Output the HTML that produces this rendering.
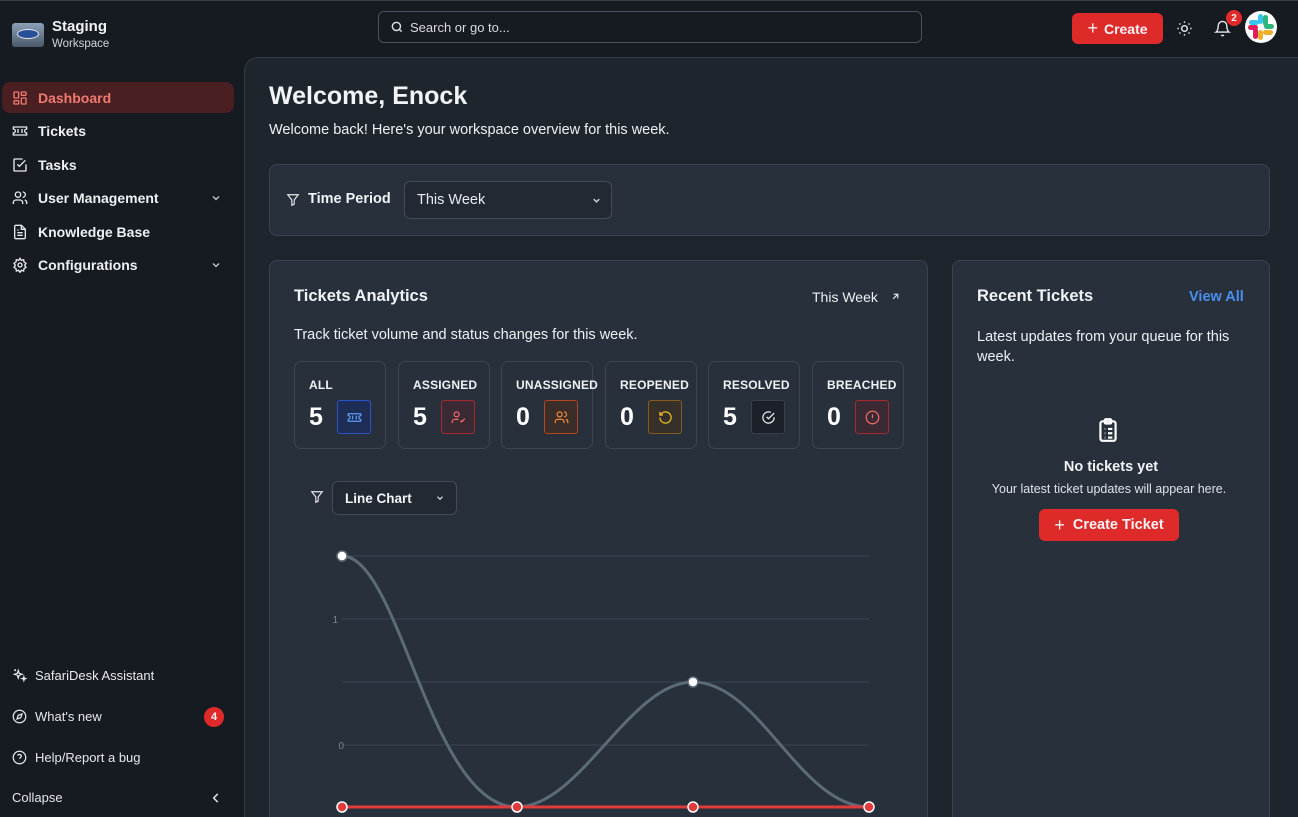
<!DOCTYPE html>
<html style="overflow:hidden;width:1298px;height:817px"><head><meta charset="utf-8"><style>
*{box-sizing:border-box;margin:0;padding:0}
body{width:1298px;height:817px;overflow:hidden;background:#161a21;font-family:"Liberation Sans",sans-serif;color:#f1f3f6;position:relative}
.abs{position:absolute}
svg{display:block}
.nav{position:absolute;left:2px;width:232px;height:31px;display:flex;align-items:center;padding-left:10px;font-size:14px;font-weight:bold;color:#eef0f3}
.nav svg{margin-right:10px}
.nav .chev{position:absolute;right:12px;margin:0}
.bot{position:absolute;left:12px;display:flex;align-items:center;font-size:13px;color:#e6e8eb}
.bot svg{margin-right:8px}
.card{position:absolute;background:#27303b;border:1px solid #3a4350;border-radius:8px}
.stat{position:absolute;top:361px;width:92px;height:88px;border:1px solid #3c4552;border-radius:7px}
.stat .l{position:absolute;left:14px;top:16px;font-size:12px;font-weight:bold;letter-spacing:.2px;color:#f0f2f5}
.stat .n{position:absolute;left:14px;top:41px;font-size:25px;font-weight:bold;color:#fff}
.stat .ic{position:absolute;left:42px;top:38px;width:34px;height:34px;border-radius:3px;border:1px solid;display:flex;align-items:center;justify-content:center}
</style></head><body>
<div class="abs" style="left:0;top:0;width:1298px;height:1px;background:#3a3f47"></div>
<div class="abs" style="left:12px;top:23px;width:32px;height:24px;border-radius:3px;background:linear-gradient(#8aa0b8,#4a5a6a);overflow:hidden"><div style="margin:6px 5px;height:10px;border-radius:50%;background:#2a4f9a;border:1px solid #e8e8e8"></div></div>
<div class="abs" style="left:52px;top:18px;font-size:15px;font-weight:bold">Staging</div>
<div class="abs" style="left:52px;top:38px;font-size:11.5px;color:#d0d5dc">Workspace</div>
<div class="nav" style="top:82px;background:#4a1f22;border-radius:8px;color:#f07a72"><svg width="16" height="16" viewBox="0 0 24 24" fill="none" stroke="#f07a72" stroke-width="2"><rect x="3" y="3" width="7" height="9" rx="1"/><rect x="14" y="3" width="7" height="5" rx="1"/><rect x="14" y="12" width="7" height="9" rx="1"/><rect x="3" y="16" width="7" height="5" rx="1"/></svg>Dashboard</div>
<div class="nav" style="top:115px"><svg width="16" height="16" viewBox="0 0 24 24" fill="none" stroke="#e8eaed" stroke-width="2"><path d="M2 9a3 3 0 0 1 0 6v3h20v-3a3 3 0 0 1 0-6V6H2z M9 9v6 M15 9v6"/></svg>Tickets</div>
<div class="nav" style="top:149px"><svg width="16" height="16" viewBox="0 0 24 24" fill="none" stroke="#e8eaed" stroke-width="2"><path d="M21 11v9a1 1 0 0 1-1 1H4a1 1 0 0 1-1-1V4a1 1 0 0 1 1-1h12"/><path d="M8 11l3 3 9-9"/></svg>Tasks</div>
<div class="nav" style="top:182px"><svg width="16" height="16" viewBox="0 0 24 24" fill="none" stroke="#e8eaed" stroke-width="2"><circle cx="9" cy="7" r="4"/><path d="M2 21v-2a4 4 0 0 1 4-4h6a4 4 0 0 1 4 4v2M16 3a4 4 0 0 1 0 8M22 21v-2a4 4 0 0 0-3-4"/></svg>User Management<svg class="chev" width="12" height="12" viewBox="0 0 24 24" fill="none" stroke="#c8ccd2" stroke-width="2.5"><path d="M6 9l6 6 6-6"/></svg></div>
<div class="nav" style="top:216px"><svg width="16" height="16" viewBox="0 0 24 24" fill="none" stroke="#e8eaed" stroke-width="2"><path d="M14 2H6a2 2 0 0 0-2 2v16a2 2 0 0 0 2 2h12a2 2 0 0 0 2-2V8z M14 2v6h6 M8 13h8 M8 17h8 M8 9h2"/></svg>Knowledge Base</div>
<div class="nav" style="top:249px"><svg width="16" height="16" viewBox="0 0 24 24" fill="none" stroke="#e8eaed" stroke-width="2"><circle cx="12" cy="12" r="3"/><path d="M12 2l2 3 3.5-1 .5 3.5 3 2-2 3 2 3-3 2-.5 3.5-3.5-1-2 3-2-3-3.5 1-.5-3.5-3-2 2-3-2-3 3-2 .5-3.5 3.5 1z"/></svg>Configurations<svg class="chev" width="12" height="12" viewBox="0 0 24 24" fill="none" stroke="#c8ccd2" stroke-width="2.5"><path d="M6 9l6 6 6-6"/></svg></div>
<div class="bot" style="top:668px"><svg width="15" height="15" viewBox="0 0 24 24" fill="none" stroke="#e6e8eb" stroke-width="2"><path d="M10 4l1.5 4.5L16 10l-4.5 1.5L10 16l-1.5-4.5L4 10l4.5-1.5z M19 14l.7 2.3 2.3.7-2.3.7L19 20l-.7-2.3-2.3-.7 2.3-.7z M5 2v3M3.5 3.5h3"/></svg>SafariDesk Assistant</div>
<div class="bot" style="top:709px"><svg width="15" height="15" viewBox="0 0 24 24" fill="none" stroke="#e6e8eb" stroke-width="2"><circle cx="12" cy="12" r="10"/><path d="M16 8l-2 6-6 2 2-6z"/></svg>What's new</div>
<div class="abs" style="left:204px;top:707px;width:20px;height:20px;border-radius:50%;background:#e02a2a;font-size:11px;font-weight:bold;display:flex;align-items:center;justify-content:center">4</div>
<div class="bot" style="top:750px"><svg width="15" height="15" viewBox="0 0 24 24" fill="none" stroke="#e6e8eb" stroke-width="2"><circle cx="12" cy="12" r="10"/><path d="M9.1 9a3 3 0 0 1 5.8 1c0 2-3 2.5-3 4M12 17.5v.5"/></svg>Help/Report a bug</div>
<div class="bot" style="top:790px">Collapse</div>
<svg class="abs" style="left:209px;top:791px" width="14" height="14" viewBox="0 0 24 24" fill="none" stroke="#e6e8eb" stroke-width="2.5"><path d="M15 5l-7 7 7 7"/></svg>
<div class="abs" style="left:378px;top:11px;width:544px;height:32px;border:1px solid #4a515c;border-radius:6px;background:#161a21;display:flex;align-items:center;padding-left:11px;font-size:13px;color:#d8dce2"><svg width="14" height="14" viewBox="0 0 24 24" fill="none" stroke="#d8dce2" stroke-width="2.5" style="margin-right:6px"><circle cx="11" cy="11" r="7"/><path d="M20 20l-4-4"/></svg>Search or go to...</div>
<div class="abs" style="left:1072px;top:13px;width:91px;height:31px;border-radius:6px;background:#df2a2a;display:flex;align-items:center;justify-content:center;font-size:14px;font-weight:bold"><span style="font-size:18px;font-weight:normal;margin-right:6px">+</span>Create</div>
<svg class="abs" style="left:1176px;top:20px" width="17" height="17" viewBox="0 0 24 24" fill="none" stroke="#e6e8eb" stroke-width="2"><circle cx="12" cy="12" r="4"/><path d="M12 2v2M12 20v2M4.9 4.9l1.4 1.4M17.7 17.7l1.4 1.4M2 12h2M20 12h2M4.9 19.1l1.4-1.4M17.7 6.3l1.4-1.4"/></svg>
<svg class="abs" style="left:1214px;top:20px" width="17" height="17" viewBox="0 0 24 24" fill="none" stroke="#e6e8eb" stroke-width="2"><path d="M6 8a6 6 0 0 1 12 0c0 7 3 9 3 9H3s3-2 3-9M10.3 21a1.9 1.9 0 0 0 3.4 0"/></svg>
<div class="abs" style="left:1226px;top:10px;width:16px;height:16px;border-radius:50%;background:#e02a2a;font-size:10px;font-weight:bold;display:flex;align-items:center;justify-content:center">2</div>
<div class="abs" style="left:1245px;top:11px;width:32px;height:32px;border-radius:50%;background:#fff;overflow:hidden">
<div class="abs" style="left:4px;top:9px;width:10px;height:5px;background:#36c5f0;border-radius:3px"></div>
<div class="abs" style="left:13px;top:3px;width:5px;height:10px;background:#36c5f0;border-radius:3px"></div>
<div class="abs" style="left:18px;top:4px;width:5px;height:11px;background:#2eb67d;border-radius:3px"></div>
<div class="abs" style="left:19px;top:13px;width:10px;height:5px;background:#2eb67d;border-radius:3px"></div>
<div class="abs" style="left:18px;top:19px;width:10px;height:5px;background:#ecb22e;border-radius:3px"></div>
<div class="abs" style="left:13px;top:19px;width:5px;height:10px;background:#ecb22e;border-radius:3px"></div>
<div class="abs" style="left:8px;top:17px;width:5px;height:11px;background:#e01e5a;border-radius:3px"></div>
<div class="abs" style="left:3px;top:14px;width:10px;height:5px;background:#e01e5a;border-radius:3px"></div>
</div>
<div class="abs" style="left:244px;top:57px;width:1054px;height:770px;background:#1f252d;border:1px solid #353c46;border-right:none;border-radius:14px 0 0 0"></div>
<div class="abs" style="left:269px;top:82px;font-size:25px;font-weight:bold">Welcome, Enock</div>
<div class="abs" style="left:269px;top:122px;font-size:14.5px;color:#eef0f3">Welcome back! Here's your workspace overview for this week.</div>
<div class="card" style="left:269px;top:164px;width:1001px;height:72px"></div>
<svg class="abs" style="left:286px;top:193px" width="14" height="14" viewBox="0 0 24 24" fill="none" stroke="#e6e8eb" stroke-width="2"><path d="M3 3h18l-7 9v7l-4 2v-9z"/></svg>
<div class="abs" style="left:308px;top:191px;font-size:14.5px;font-weight:bold">Time Period</div>
<div class="abs" style="left:404px;top:181px;width:208px;height:38px;border:1px solid #434b57;border-radius:6px;background:#222932;padding:10px 12px;font-size:14.5px;color:#e8eaee">This Week</div>
<svg class="abs" style="left:591px;top:195px" width="11" height="11" viewBox="0 0 24 24" fill="none" stroke="#d0d4da" stroke-width="3"><path d="M6 9l6 6 6-6"/></svg>
<div class="card" style="left:269px;top:260px;width:659px;height:570px"></div>
<div class="abs" style="left:294px;top:287px;font-size:16.5px;font-weight:bold">Tickets Analytics</div>
<div class="abs" style="left:812px;top:289px;font-size:14px;color:#eef0f3">This Week</div>
<svg class="abs" style="left:890px;top:291px" width="11" height="11" viewBox="0 0 24 24" fill="none" stroke="#e6e8eb" stroke-width="2.5"><path d="M7 17L17 7M8 7h9v9"/></svg>
<div class="abs" style="left:294px;top:327px;font-size:14.5px;color:#eef0f3">Track ticket volume and status changes for this week.</div>
<div class="stat" style="left:294px"><div class="l">ALL</div><div class="n">5</div><div class="ic" style="border-color:#2a55c8;background:#1e2d55"><svg width="15" height="15" viewBox="0 0 24 24" fill="none" stroke="#5b9cf5" stroke-width="2"><path d="M2 9a3 3 0 0 1 0 6v3h20v-3a3 3 0 0 1 0-6V6H2z M9 9v6 M15 9v6"/></svg></div></div>
<div class="stat" style="left:398px"><div class="l">ASSIGNED</div><div class="n">5</div><div class="ic" style="border-color:#a32a2e;background:#3b2a33"><svg width="15" height="15" viewBox="0 0 24 24" fill="none" stroke="#f06a6a" stroke-width="2"><circle cx="9" cy="7" r="4"/><path d="M2 21v-2a4 4 0 0 1 4-4h6M15 17l2 2 5-5"/></svg></div></div>
<div class="stat" style="left:501px"><div class="l">UNASSIGNED</div><div class="n">0</div><div class="ic" style="border-color:#b3471f;background:#3b2d2a"><svg width="15" height="15" viewBox="0 0 24 24" fill="none" stroke="#f08a3a" stroke-width="2"><circle cx="9" cy="7" r="4"/><path d="M2 21v-2a4 4 0 0 1 4-4h6a4 4 0 0 1 4 4v2M16 3a4 4 0 0 1 0 8M22 21v-2a4 4 0 0 0-3-4"/></svg></div></div>
<div class="stat" style="left:605px"><div class="l">REOPENED</div><div class="n">0</div><div class="ic" style="border-color:#8a5a1a;background:#35302a"><svg width="15" height="15" viewBox="0 0 24 24" fill="none" stroke="#f0c020" stroke-width="2"><path d="M3 12a9 9 0 1 0 3-6.7L3 8M3 3v5h5"/></svg></div></div>
<div class="stat" style="left:708px"><div class="l">RESOLVED</div><div class="n">5</div><div class="ic" style="border-color:#3a414c;background:#1b2029"><svg width="15" height="15" viewBox="0 0 24 24" fill="none" stroke="#e8eaee" stroke-width="2"><path d="M21 11.5V12a9 9 0 1 1-5.3-8.2M9 11l3 3 9-9"/></svg></div></div>
<div class="stat" style="left:812px"><div class="l">BREACHED</div><div class="n">0</div><div class="ic" style="border-color:#a32a2e;background:#3b2a33"><svg width="15" height="15" viewBox="0 0 24 24" fill="none" stroke="#f06a6a" stroke-width="2"><circle cx="12" cy="12" r="10"/><path d="M12 7v6M12 16.5v.5"/></svg></div></div>
<svg class="abs" style="left:310px;top:490px" width="14" height="14" viewBox="0 0 24 24" fill="none" stroke="#e6e8eb" stroke-width="2"><path d="M3 3h18l-7 9v7l-4 2v-9z"/></svg>
<div class="abs" style="left:332px;top:481px;width:125px;height:34px;border:1px solid #434b57;border-radius:6px;background:#222932;padding:9px 12px;font-size:13.5px;font-weight:bold">Line Chart</div>
<svg class="abs" style="left:435px;top:493px" width="10" height="10" viewBox="0 0 24 24" fill="none" stroke="#d0d4da" stroke-width="3"><path d="M6 9l6 6 6-6"/></svg>
<svg class="abs" style="left:0;top:0" width="1298" height="817">
<g stroke="#3b4450" stroke-width="1"><line x1="342" y1="556" x2="869" y2="556"/><line x1="342" y1="619" x2="869" y2="619"/><line x1="342" y1="682" x2="869" y2="682"/><line x1="342" y1="745" x2="869" y2="745"/></g>
<text x="338" y="623" fill="#7d8590" font-size="10" text-anchor="end" font-family="Liberation Sans">1</text>
<text x="344" y="749" fill="#7d8590" font-size="10" text-anchor="end" font-family="Liberation Sans">0</text>
<path d="M342 556 C400 556 430 807 517 807 C580 807 630 682 693 682 C760 682 800 807 869 807" fill="none" stroke="#5c6b78" stroke-width="3"/>
<line x1="342" y1="807" x2="869" y2="807" stroke="#e03a3a" stroke-width="3"/>
<g fill="#fff" stroke="#5c6b78" stroke-width="1.5"><circle cx="342" cy="556" r="5"/><circle cx="693" cy="682" r="5"/></g>
<g fill="#e03a3a" stroke="#fff" stroke-width="1.5"><circle cx="342" cy="807" r="5"/><circle cx="517" cy="807" r="5"/><circle cx="693" cy="807" r="5"/><circle cx="869" cy="807" r="5"/></g>
</svg>
<div class="card" style="left:952px;top:260px;width:318px;height:570px"></div>
<div class="abs" style="left:977px;top:287px;font-size:16.5px;font-weight:bold">Recent Tickets</div>
<div class="abs" style="left:1189px;top:289px;font-size:14.5px;font-weight:bold;color:#4a8ff0">View All</div>
<div class="abs" style="left:977px;top:327px;width:270px;font-size:14.5px;line-height:20px;color:#eef0f3">Latest updates from your queue for this week.</div>
<svg class="abs" style="left:1095px;top:416px" width="26" height="28" viewBox="0 0 24 24" fill="none" stroke="#fff" stroke-width="2"><rect x="5" y="4" width="14" height="18" rx="2"/><rect x="9" y="2" width="6" height="4" rx="1"/><path d="M9 11h.5M12 11h4M9 15h.5M12 15h4M9 19h.5M12 19h4"/></svg>
<div class="abs" style="left:952px;top:459px;width:318px;text-align:center;font-size:14.5px;font-weight:bold">No tickets yet</div>
<div class="abs" style="left:952px;top:482px;width:314px;text-align:center;font-size:12.5px;color:#e0e3e8">Your latest ticket updates will appear here.</div>
<div class="abs" style="left:1039px;top:509px;width:140px;height:32px;border-radius:6px;background:#df2a2a;display:flex;align-items:center;justify-content:center;font-size:14.5px;font-weight:bold"><span style="font-size:18px;font-weight:normal;margin-right:8px">+</span>Create Ticket</div>
</body></html>
